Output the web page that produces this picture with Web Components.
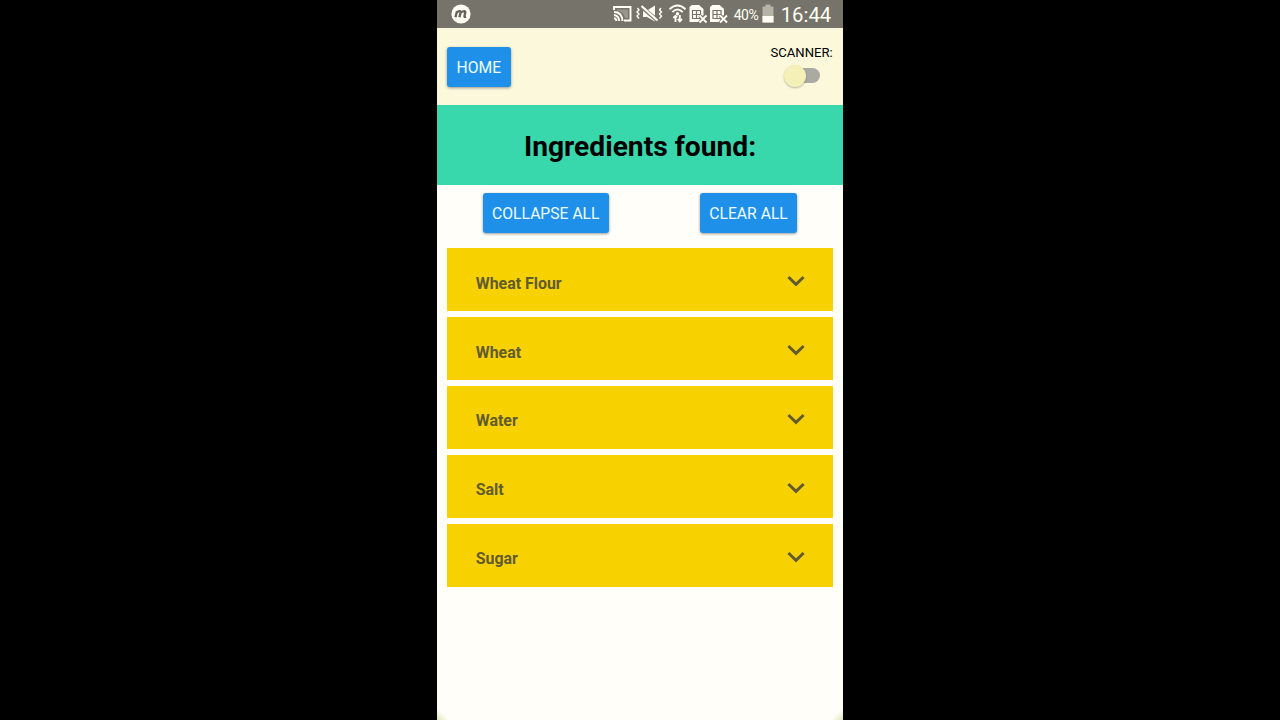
<!DOCTYPE html>
<html lang="en"><head><meta charset="utf-8"><title>Ingredients</title>
<style>html,body{margin:0;height:100%;background:#000;overflow:hidden}body{font-family:Roboto,"Liberation Sans",sans-serif}</style></head>
<body>
<phone-screen></phone-screen>
<script>
const define=(name,html)=>customElements.define(name,class extends HTMLElement{
 constructor(){super();this.attachShadow({mode:'open'}).innerHTML=html}
});
define('app-button',`<style>:host{display:block;box-sizing:border-box;height:40px;line-height:42px;padding:0 9px;border-radius:3px;background:#1f90ea;color:#eefcff;font-size:15.7px;text-align:center;white-space:nowrap;box-shadow:0 1px 3px #0006}</style><slot></slot>`);
define('toggle-switch',`<style>:host{display:flex;align-items:center;width:36px;height:22px}
i{display:block;width:22px;height:22px;border-radius:50%;background:#f4f0b8;box-shadow:0 1px 2px #0004;z-index:1}
b{display:block;width:26px;height:15px;border-radius:8px;background:#aaa9a2;margin-left:-12px}</style><i></i><b></b>`);
define('ingredient-row',`<style>:host{display:flex;box-sizing:border-box;height:62.7px;padding:7px 28px 0;align-items:center;justify-content:space-between;background:#f8d200;color:#625b30;font-weight:700;font-size:15.9px}
span{padding-left:.5px}svg{display:block;margin-top:-4px}</style><span><slot></slot></span><svg width="18" height="12" viewBox="0 0 18 12"><path d="M1.4 2 9 9.4 16.6 2" fill="none" stroke="#625b30" stroke-width="2.9"/></svg>`);
define('status-bar',`<style>:host{display:flex;height:28px;background:#75736a;color:#fffff4;align-items:center;box-sizing:border-box;padding:0 12px 0 14px}
svg{display:block;flex:none}.sp{flex:1}.pct{font-size:14px;width:28px;letter-spacing:-.5px;margin-top:2px}.time{font-size:20.3px;width:50px;line-height:28px;margin-top:2px;white-space:nowrap}</style>
<svg width="20" height="28" viewBox="0 0 20 28"><circle cx="10" cy="14" r="9.6" fill="#fffff4"/><path d="M4.4 17.3 6 11.5M5.7 12.3Q10 9.8 9.5 12.8L8.5 17.3M9.6 12.5Q14.8 9.5 14.2 12.9L13.4 16.2Q13.2 17.3 15 16.7" fill="none" stroke="#66645c" stroke-width="2.4"/></svg>
<span class="sp"></span>
<svg width="118" height="28" viewBox="610 0 118 28" fill="none" stroke="#fffff4" stroke-width="1.9">
<path d="M614 10V7H630.5V20.5H624M614 12Q622 12 622.5 21M614 15Q618.7 15.5 619.2 21M614 18.3Q616 18.5 616.5 21"/><path d="M617 9.5H628V18H625Q623.5 11.5 617 10.5Z" fill="#fffff4" fill-opacity=".25" stroke="none"/>
<path d="M643 10.5H647L655 5.5V21.5L647 17H643Z" fill="#fffff4" stroke="none"/><path d="M640.5 6 657.5 20.5" stroke="#75736a" stroke-width="4"/><path d="M641.5 6 657.5 20.5" stroke-width="2.2"/>
<path d="M637.5 8 639 10 637 12 639 14 637 16 639 18.5M661 8 659.5 10 661.5 12 659.5 14 661.5 16 659.5 18.5" stroke-width="1.4"/>
<path d="M669.5 9.3Q677.5 1.8 685.5 9.3M672.3 12.2Q677.5 7 682.7 12.2"/><circle cx="677.5" cy="13.8" r="1.7" fill="#fffff4" stroke="none"/><path d="M675.5 22V16M673.4 18 675.5 15.8 677 17.5M679.8 15V21M677.8 19 679.8 21.3 682 19"/>
<g id="sim"><path d="M689.5 7 692 5H699L703.5 9V15L699 18 701 22H689.5Z" fill="#fffff4" stroke="none"/><path d="M692.5 10.5H700.5V18.5H692.5ZM692.5 14.5H700.5M696.5 10.5V18.5" stroke="#75736a" stroke-width="1.2"/><path d="M699.5 15.5 707 22.8M707 15.5 699.5 22.8" stroke="#75736a" stroke-width="3.5"/><path d="M699.5 15.5 706.5 22.5M706.5 15.5 699.5 22.5" stroke-width="1.8"/></g><use href="#sim" x="20.5"/></svg>
<svg width="6" height="1"></svg><span class="pct">40%</span>
<svg width="12" height="28" viewBox="0 0 12 28"><path d="M.5 6.5H3.5V4.5H8.5V6.5H11.5V22.5H.5Z" fill="#b6b4a8"/><path d="M.5 16H11.5V22.5H.5Z" fill="#fffff4"/></svg><svg width="7" height="1"></svg>
<span class="time">16:44</span>`);
define('phone-screen',`<style>:host{display:flex;flex-direction:column;width:405.4px;height:720px;margin-left:437.3px;background:#fffef9}
header{display:flex;height:77px;box-sizing:border-box;background:#fbf8dc;padding:18.6px 10px 0 9.6px;justify-content:space-between;align-items:flex-start}
.home{width:63.8px}.scan{font-size:13.1px;line-height:16px;margin-top:-2px;color:#000;display:flex;flex-direction:column;align-items:center}toggle-switch{margin-top:4px;margin-left:1px}
h1{margin:0;height:80px;line-height:83px;background:#38d8ac;text-align:center;font-size:28.2px;color:#000}
nav{display:flex;box-sizing:border-box;justify-content:space-between;padding:8.3px 45.5px 0;height:55px}.c{width:126px}.d{width:97.3px}
main{margin-top:8.4px;padding:0 10px;display:flex;flex-direction:column;gap:6.2px}
footer{margin-top:auto;height:13px;background:linear-gradient(45deg,#e5e3bf 0,#fffef900 9px),linear-gradient(-45deg,#e5e3bf 0,#fffef900 9px)}</style>
<status-bar></status-bar><header><app-button class="home">HOME</app-button><div class="scan"><span>SCANNER:</span><toggle-switch></toggle-switch></div></header><h1>Ingredients found:</h1>
<nav><app-button class="c">COLLAPSE ALL</app-button><app-button class="d">CLEAR ALL</app-button></nav>
<main><ingredient-row>Wheat Flour</ingredient-row><ingredient-row>Wheat</ingredient-row><ingredient-row>Water</ingredient-row><ingredient-row>Salt</ingredient-row><ingredient-row>Sugar</ingredient-row></main><footer></footer>`);
</script></body></html>
